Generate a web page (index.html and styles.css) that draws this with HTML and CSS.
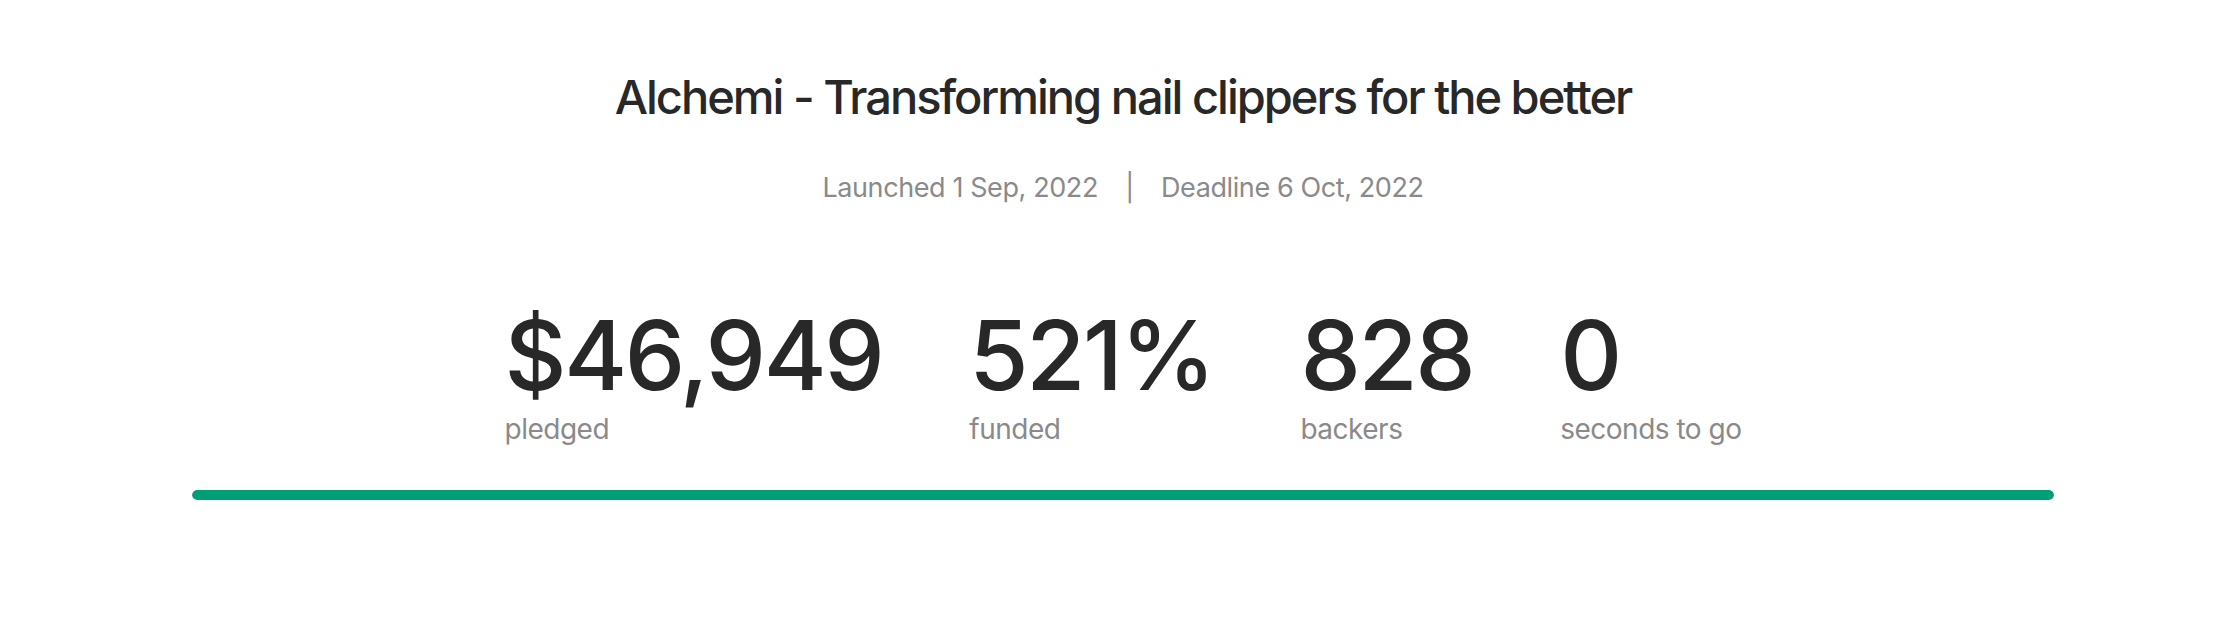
FILE: index.html
```html
<!DOCTYPE html>
<html lang="en">
<head>
  <meta charset="UTF-8">
  <meta name="viewport" content="width=device-width, initial-scale=1.0">
  <title>Alchemi - Campaign Stats</title>
  <link rel="stylesheet" href="styles.css">
</head>
<body>
  <div class="campaign">
    <h1 class="campaign-title">Alchemi - Transforming nail clippers for the better</h1>
    <p class="campaign-dates">
      <span>Launched 1 Sep, 2022</span>
      <span class="divider">|</span>
      <span>Deadline 6 Oct, 2022</span>
    </p>

    <!-- Stats -->
    <div class="stats">
      <div class="stat">
        <div class="stat-value">$46,949</div>
        <div class="stat-label">pledged</div>
      </div>
      <div class="stat">
        <div class="stat-value">521%</div>
        <div class="stat-label">funded</div>
      </div>
      <div class="stat">
        <div class="stat-value">828</div>
        <div class="stat-label">backers</div>
      </div>
      <div class="stat">
        <div class="stat-value">0</div>
        <div class="stat-label">seconds to go</div>
      </div>
    </div>

    <div class="progress"><div class="progress-fill" style="width: 100%;"></div></div>
  </div>
</body>
</html>
```

FILE: styles.css
```css
/* General Reset */
body, h1, p {
  margin: 0;
  padding: 0;
}
body {
  background-color: #fff;
  color: #282828;
  font-family: 'Inter', sans-serif;
}
.campaign {
  margin: 0 170px 0 192px;
  padding-top: 68px;
  text-align: center;
}
.campaign-title {
  font-size: 47px;
  font-weight: 500;
  line-height: 57px;
  letter-spacing: -2px;
  color: #282828;
}
.campaign-dates {
  margin-top: 46px;
  font-size: 27px;
  line-height: 33px;
  letter-spacing: -0.4px;
  color: #8a8a8a;
}
.campaign-dates .divider {
  margin: 0 20px;
}
.stats {
  display: flex;
  justify-content: center;
  gap: 87px;
  margin-top: 103px;
  text-align: left;
}
.stat-value {
  font-size: 96px;
  font-weight: 500;
  line-height: 96px;
  letter-spacing: -2.4px;
  color: #282828;
}
.stat-label {
  margin-top: 9px;
  font-size: 28px;
  line-height: 34px;
  letter-spacing: -0.5px;
  color: #8a8a8a;
}
.progress {
  margin-top: 44px;
  height: 10px;
  border-radius: 5px;
  background-color: #e6e6e6;
  overflow: hidden;
}
.progress-fill {
  height: 100%;
  border-radius: 5px;
  background-color: #009e74;
}
```
